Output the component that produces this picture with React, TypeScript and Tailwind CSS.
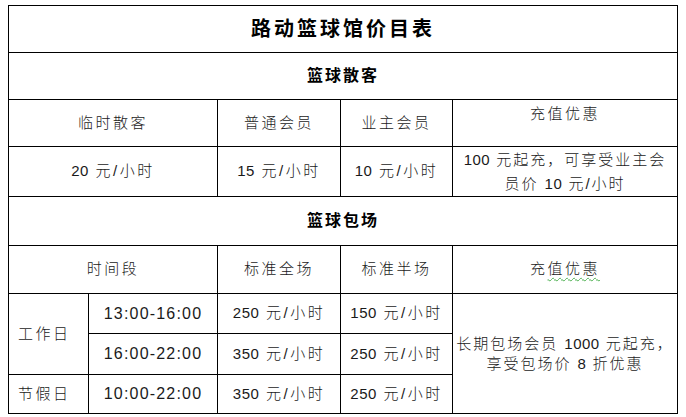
import React from "react";

const font = { fontFamily: '"Liberation Sans", "Noto Sans CJK SC", sans-serif' };

function N({ children }: { children: React.ReactNode }) {
  return <span className="tracking-[0.5px]">{children}</span>;
}

export default function App() {
  const cell = "border border-black text-center align-middle p-0";
  return (
    <div className="w-[686px] h-[417px] bg-white pt-[5px] pl-[8px] text-[#1a1a1a]" style={font}>
      <table className="border-collapse table-fixed w-[669px] text-[15px] tracking-[2.5px] font-light">
        <colgroup>
          <col className="w-[80px]" />
          <col className="w-[129px]" />
          <col className="w-[123px]" />
          <col className="w-[112px]" />
          <col className="w-[225px]" />
        </colgroup>
        <tbody>
          <tr className="h-[47px]">
            <td colSpan={5} className={`${cell} text-[20px] !font-bold tracking-[3px] text-black`}>路动篮球馆价目表</td>
          </tr>
          <tr className="h-[47px]">
            <td colSpan={5} className={`${cell} text-[16px] !font-bold tracking-[2px] text-black`}>篮球散客</td>
          </tr>
          <tr className="h-[47px]">
            <td colSpan={2} className={cell}>临时散客</td>
            <td className={cell}>普通会员</td>
            <td className={cell}>业主会员</td>
            <td className={`${cell} !align-top pt-[3px]`}>充值优惠</td>
          </tr>
          <tr className="h-[50px]">
            <td colSpan={2} className={cell}><N>20</N> 元/小时</td>
            <td className={cell}><N>15</N> 元/小时</td>
            <td className={cell}><N>10</N> 元/小时</td>
            <td className={`${cell} leading-[24px] tracking-[2px]`}><N>100</N> 元起充，可享受业主会<br />员价 <N>10</N> 元/小时</td>
          </tr>
          <tr className="h-[49px]">
            <td colSpan={5} className={`${cell} text-[16px] !font-bold tracking-[2px] text-black`}>篮球包场</td>
          </tr>
          <tr className="h-[48px]">
            <td colSpan={2} className={cell}>时间段</td>
            <td className={cell}>标准全场</td>
            <td className={cell}>标准半场</td>
            <td className={cell}>
              充<span className="underline decoration-wavy decoration-[#4caf50] decoration-1 underline-offset-[3px]">值优惠</span>
            </td>
          </tr>
          <tr className="h-[40px]">
            <td rowSpan={2} className={`${cell} !text-left pl-[9px]`}>工作日</td>
            <td className={`${cell} text-[16px] tracking-[1.2px]`}>13:00-16:00</td>
            <td className={cell}><N>250</N> 元/小时</td>
            <td className={cell}><N>150</N> 元/小时</td>
            <td rowSpan={3} className={`${cell} leading-[20px] tracking-[2px]`}>
              长期包场会员 <N>1000</N> 元起充，<br />享受包场价 <N>8</N> 折优惠
            </td>
          </tr>
          <tr className="h-[41px]">
            <td className={`${cell} text-[16px] tracking-[1.2px]`}>16:00-22:00</td>
            <td className={cell}><N>350</N> 元/小时</td>
            <td className={cell}><N>250</N> 元/小时</td>
          </tr>
          <tr className="h-[39px]">
            <td className={`${cell} !text-left pl-[9px]`}>节假日</td>
            <td className={`${cell} text-[16px] tracking-[1.2px]`}>10:00-22:00</td>
            <td className={cell}><N>350</N> 元/小时</td>
            <td className={cell}><N>250</N> 元/小时</td>
          </tr>
        </tbody>
      </table>
    </div>
  );
}
